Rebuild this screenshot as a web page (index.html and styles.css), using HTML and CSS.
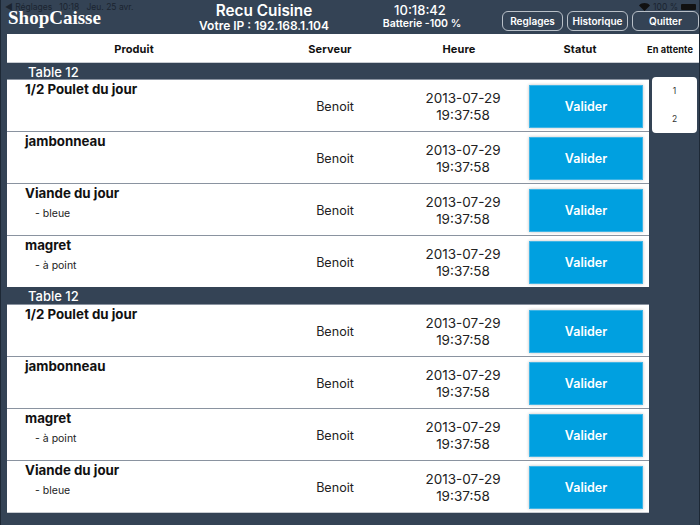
FILE: index.html
```html
<!DOCTYPE html>
<html lang="fr">
<head>
  <meta charset="UTF-8" />
  <title>Recu Cuisine</title>
  <link rel="stylesheet" href="styles.css">
</head>
<body>
  <div class="page">
    <div class="statusbar">
      <span>◀ Réglages&nbsp;&nbsp;&nbsp;10:18&nbsp;&nbsp;&nbsp;Jeu. 25 avr.</span>
      <span class="status-right">
        <svg width="11" height="8" viewBox="0 0 11 8"><path d="M5.5 8 0 2.4C3-.8 8-.8 11 2.4z" fill="#111"/></svg>
        100 %
        <span class="battery"></span>
      </span>
    </div>

    <div class="topbar">
      <div class="logo">ShopCaisse</div>
      <div class="title">
        <div class="title-main">Recu Cuisine</div>
        <div class="title-sub">Votre IP : 192.168.1.104</div>
      </div>
      <div class="clock">
        <div class="clock-time">10:18:42</div>
        <div class="clock-sub">Batterie -100 %</div>
      </div>
      <div class="top-buttons">
        <button class="top-btn btn-reglages">Reglages</button>
        <button class="top-btn btn-historique">Historique</button>
        <button class="top-btn btn-quitter">Quitter</button>
      </div>
    </div>

    <div class="col-head">
      <div class="h-produit">Produit</div>
      <div class="h-serveur">Serveur</div>
      <div class="h-heure">Heure</div>
      <div class="h-statut">Statut</div>
      <div class="h-attente">En attente</div>
    </div>

    <div class="main">
      <div class="list">
        <div class="table-name">Table 12</div>
        <div class="row">
          <div class="product"><div class="name">1/2 Poulet du jour</div></div>
          <div class="server">Benoit</div>
          <div class="date">2013-07-29<br>19:37:58</div>
          <button class="validate">Valider</button>
        </div>
        <div class="row">
          <div class="product"><div class="name">jambonneau</div></div>
          <div class="server">Benoit</div>
          <div class="date">2013-07-29<br>19:37:58</div>
          <button class="validate">Valider</button>
        </div>
        <div class="row">
          <div class="product"><div class="name">Viande du jour</div><div class="option">- bleue</div></div>
          <div class="server">Benoit</div>
          <div class="date">2013-07-29<br>19:37:58</div>
          <button class="validate">Valider</button>
        </div>
        <div class="row">
          <div class="product"><div class="name">magret</div><div class="option">- à point</div></div>
          <div class="server">Benoit</div>
          <div class="date">2013-07-29<br>19:37:58</div>
          <button class="validate">Valider</button>
        </div>

        <div class="table-name">Table 12</div>
        <div class="row">
          <div class="product"><div class="name">1/2 Poulet du jour</div></div>
          <div class="server">Benoit</div>
          <div class="date">2013-07-29<br>19:37:58</div>
          <button class="validate">Valider</button>
        </div>
        <div class="row">
          <div class="product"><div class="name">jambonneau</div></div>
          <div class="server">Benoit</div>
          <div class="date">2013-07-29<br>19:37:58</div>
          <button class="validate">Valider</button>
        </div>
        <div class="row">
          <div class="product"><div class="name">magret</div><div class="option">- à point</div></div>
          <div class="server">Benoit</div>
          <div class="date">2013-07-29<br>19:37:58</div>
          <button class="validate">Valider</button>
        </div>
        <div class="row">
          <div class="product"><div class="name">Viande du jour</div><div class="option">- bleue</div></div>
          <div class="server">Benoit</div>
          <div class="date">2013-07-29<br>19:37:58</div>
          <button class="validate">Valider</button>
        </div>
      </div>

      <div class="waiting">
        <div class="waiting-item">1</div>
        <div class="waiting-item">2</div>
      </div>
    </div>
  </div>
</body>
</html>
```

FILE: styles.css
```css
* { box-sizing: border-box; margin: 0; padding: 0; }
body {
  font-family: Inter, "Liberation Sans", sans-serif;
  background: #344355;
  color: #111;
  overflow: hidden;
}
.page {
  position: relative;
  width: 700px;
  height: 525px;
  background: #344355;
  border-left: 1px solid #1d2835;
  border-right: 1px solid #1d2835;
}

/* la barre iOS passe par dessus le header */
.statusbar {
  position: absolute;
  top: 2px;
  left: 4px;
  right: 3px;
  display: flex;
  justify-content: space-between;
  font-size: 8.5px;
  line-height: 10px;
  color: #1b2430;
}
.status-right {
  display: flex;
  align-items: center;
  gap: 3px;
}
.battery {
  width: 15px;
  height: 6px;
  background: #111;
  border-radius: 1px;
}

.topbar {
  display: flex;
  height: 34px;
  color: #fff;
}
.logo {
  width: 163px;
  padding: 8px 0 0 7px;
  font-family: "Liberation Serif", serif;
  font-size: 19px;
  line-height: 20px;
  font-weight: bold;
}
.title {
  width: 200px;
  text-align: center;
}
.title-main {
  padding-top: 3px;
  font-size: 15.3px;
  line-height: 16px;
  font-weight: 600;
}
.title-sub {
  font-size: 12px;
  line-height: 13px;
  font-weight: 600;
}
.clock {
  width: 112px;
  text-align: center;
}
.clock-time {
  padding-top: 3px;
  font-size: 13px;
  line-height: 15px;
  font-weight: 500;
}
.clock-sub {
  padding-left: 4px;
  font-size: 10.5px;
  line-height: 12px;
  font-weight: 600;
}
.top-buttons {
  display: flex;
  gap: 4px;
  margin-left: 26px;
  padding-top: 11px;
}
.top-btn {
  height: 20px;
  background: transparent;
  border: 1px solid #b9c0c8;
  border-radius: 6px;
  color: #fff;
  font-family: inherit;
  font-size: 10px;
  font-weight: 600;
}
.btn-reglages { width: 61px; }
.btn-historique { width: 61px; }
.btn-quitter { width: 67px; }

.col-head {
  display: flex;
  align-items: center;
  height: 29px;
  margin-left: 6px;
  padding-top: 2px;
  background: #fff;
  border-bottom: 1px solid #c8ccd2;
  font-size: 11px;
  font-weight: 700;
  text-align: center;
  letter-spacing: 0.1px;
}
.h-produit { width: 254px; }
.h-serveur { width: 138px; }
.h-heure { width: 120px; }
.h-statut { width: 122px; }
.h-attente { width: 58px; font-size: 9.2px; }

.main {
  display: flex;
  margin-left: 6px;
}
.list { width: 642px; }
.table-name {
  height: 17px;
  padding: 1px 0 0 21px;
  border-bottom: 1px solid #8a93a0;
  color: #fff;
  font-size: 13px;
  line-height: 16px;
  font-weight: 500;
}
.row + .table-name { padding-top: 0; }
.row {
  display: grid;
  grid-template-columns: 289px 78px 155px 114px;
  height: 52px;
  background: #fff;
  border-bottom: 1px solid #8a93a0;
}
.row:nth-child(5) { border-bottom-color: #344355; }
.row:last-child { border-bottom-color: #c8ccd2; }
.product { padding: 1px 0 0 18px; }
.name {
  font-size: 13.3px;
  line-height: 16px;
  font-weight: 700;
}
.option {
  margin-top: 6px;
  padding-left: 10px;
  font-size: 10.5px;
  line-height: 14px;
  color: #222;
}
.server, .date {
  align-self: center;
  text-align: center;
  font-size: 13.5px;
  color: #222;
}
.server {
  padding-top: 1px;
  font-size: 12.6px;
}
.date {
  padding: 2px 0 0 23px;
  line-height: 16.5px;
}
.validate {
  align-self: start;
  height: 43px;
  margin-top: 5px;
  background: #00a0e0;
  border: 1px solid #3fb5e6;
  box-shadow: 0 0 3px rgba(0,0,0,0.25);
  color: #fff;
  font-family: inherit;
  font-size: 12.5px;
  font-weight: 600;
}

.waiting {
  width: 45px;
  height: 56px;
  margin: 14px 0 0 3px;
  padding-top: 1px;
  background: #fff;
  border-radius: 4px;
}
.waiting-item {
  height: 27.5px;
  text-align: center;
  font-size: 8.5px;
  line-height: 27px;
  color: #333;
}
```
